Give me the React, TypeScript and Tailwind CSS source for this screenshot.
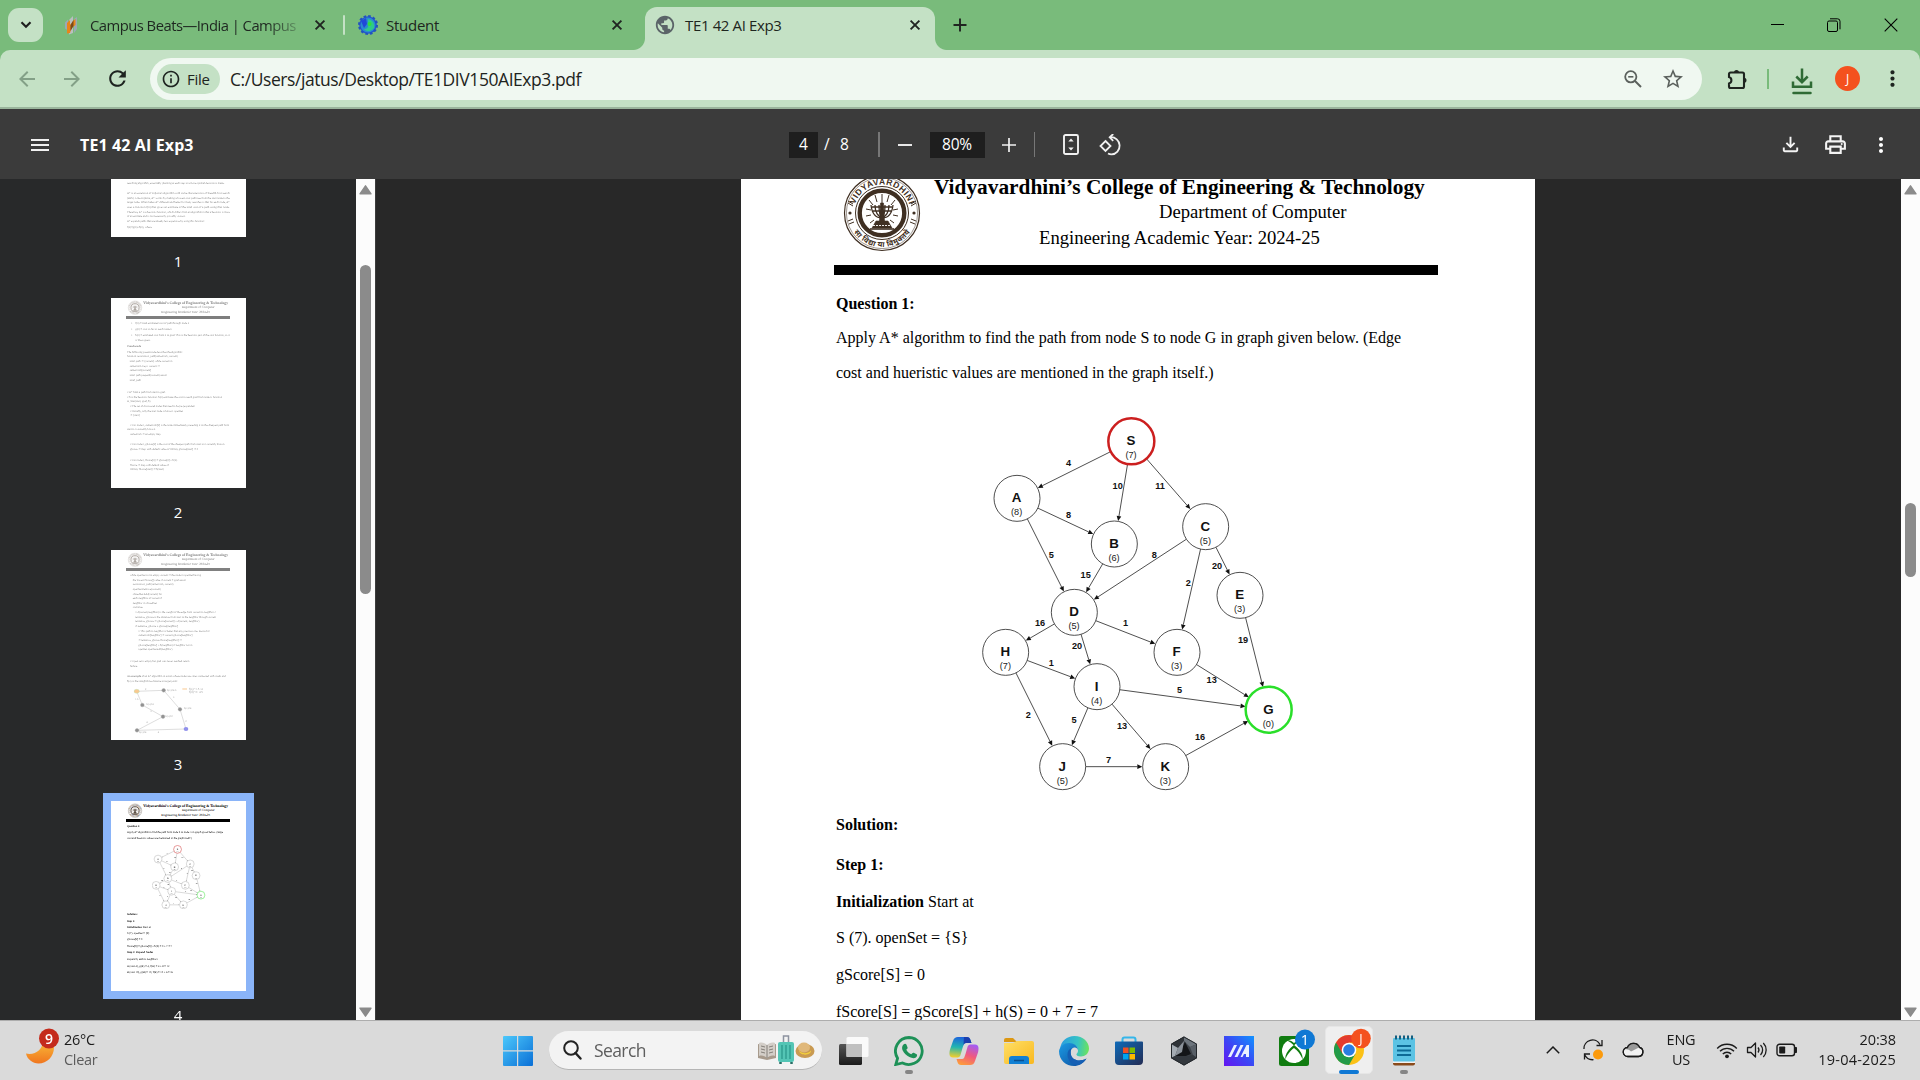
import React from "react";
import {
  MdArrowBack,
  MdArrowForward,
  MdRefresh,
  MdStarBorder,
  MdMoreVert,
  MdPublic,
  MdInfoOutline,
  MdOutlinePrint,
  MdOutlineFileDownload,
} from "react-icons/md";

/* ---------- data ---------- */

type GraphNode = { id: string; h: number; x: number; y: number; color?: string };

const NODES: GraphNode[] = [
  { id: "S", h: 7, x: 514, y: 124, color: "#cc1f1f" },
  { id: "A", h: 8, x: 171, y: 295 },
  { id: "B", h: 6, x: 463, y: 432 },
  { id: "C", h: 5, x: 737, y: 380 },
  { id: "E", h: 3, x: 840, y: 586 },
  { id: "D", h: 5, x: 343, y: 637 },
  { id: "H", h: 7, x: 137, y: 757 },
  { id: "F", h: 3, x: 651, y: 757 },
  { id: "I", h: 4, x: 411, y: 860 },
  { id: "G", h: 0, x: 926, y: 929, color: "#2adf2a" },
  { id: "J", h: 5, x: 308, y: 1100 },
  { id: "K", h: 3, x: 617, y: 1100 },
];

const EDGES: [string, string, string, number, number][] = [
  ["S", "A", "4", 326, 190],
  ["S", "B", "10", 473, 259],
  ["S", "C", "11", 600, 259],
  ["A", "B", "8", 326, 344],
  ["A", "D", "5", 274, 464],
  ["B", "D", "15", 377, 524],
  ["C", "D", "8", 583, 464],
  ["C", "E", "20", 771, 498],
  ["C", "F", "2", 685, 550],
  ["D", "H", "16", 240, 670],
  ["D", "F", "1", 497, 670],
  ["D", "I", "20", 351, 738],
  ["H", "I", "1", 274, 790],
  ["F", "G", "13", 755, 841],
  ["E", "G", "19", 849, 721],
  ["I", "G", "5", 659, 869],
  ["H", "J", "2", 205, 944],
  ["I", "J", "5", 342, 961],
  ["I", "K", "13", 486, 978],
  ["J", "K", "7", 446, 1081],
  ["K", "G", "16", 720, 1012],
];

type ThumbLine = [number, number, string, number?, boolean?];

const THUMB1: ThumbLine[] = [
  [48, 411, "searching algorithm, essentially planning at each step to a more optimal decision is made.", 292],
  [48, 440, "A* is an extension of Dijkstra's algorithm with some characteristics of breadth-first search", 308],
  [48, 456, "(BFS). Like Dijkstra, A* works by making a lowest-cost path tree from the start node to the", 308],
  [48, 468, "target node. What makes A* different and better for many searches is that for each node, A*", 308],
  [48, 482, "uses a function f(n) that gives an estimate of the total cost of a path using that node.", 308],
  [48, 498, "Therefore, A* is a heuristic function, which differs from an algorithm in that a heuristic is more", 308],
  [48, 510, "of an estimate and is not necessarily provably correct.", 175],
  [48, 525, "A* expands paths that are already less expensive by using this function:", 233],
  [48, 543, "f(n)=g(n)+h(n), where", 74],
];

const THUMB2: ThumbLine[] = [
  [60, 79, "•", 4],
  [73, 79, "f(n) = total estimated cost of path through node n", 161],
  [60, 97, "•", 4],
  [73, 97, "g(n) = cost so far to reach node n", 109],
  [60, 115, "•", 4],
  [73, 115, "h(n) = estimated cost from n to goal. This is the heuristic part of the cost function, so it", 283],
  [73, 130, "is like a guess.", 46],
  [48, 147, "Pseudocode", 42, true],
  [48, 166, "The following pseudocode describes the algorithm:", 167],
  [48, 178, "function reconstruct_path(cameFrom, current)", 152],
  [56, 193, "total_path := {current} while current in", 128],
  [56, 208, "cameFrom.Keys: current :=", 90],
  [56, 220, "cameFrom[current]", 64],
  [56, 235, "total_path.prepend(current) return", 112],
  [56, 250, "total_path", 34],
  [48, 286, "// A* finds a path from start to goal.", 116],
  [48, 301, "// h is the heuristic function. h(n) estimates the cost to reach goal from node n. function", 285],
  [48, 313, "A_Star(start, goal, h)", 70],
  [57, 328, "// The set of discovered nodes that need to be (re-)expanded.", 195],
  [57, 343, "// Initially, only the start node is known. openSet", 159],
  [57, 355, ":= {start}", 30],
  [57, 385, "// For node n, cameFrom[n] is the node immediately preceding it on the cheapest path from", 297],
  [48, 397, "start to n currently known.", 86],
  [57, 412, "cameFrom := an empty map", 92],
  [57, 442, "// For node n, gScore[n] is the cost of the cheapest path from start to n currently known.", 285],
  [57, 457, "gScore := map with default value of Infinity gScore[start] := 0", 204],
  [57, 490, "// For node n, fScore[n] := gScore[n] + h(n).", 143],
  [57, 505, "fScore := map with default value of", 116],
  [57, 517, "Infinity fScore[start] := h(start)", 102],
];

const THUMB3: ThumbLine[] = [
  [57, 79, "while openSet is not empty current := the node in openSet having", 213],
  [65, 94, "the lowest fScore[] value if current = goal return", 160],
  [65, 106, "reconstruct_path(cameFrom, current)", 122],
  [65, 121, "openSet.Remove(current)", 84],
  [65, 135, "closedSet.Add(current) for", 88],
  [65, 148, "each neighbor of current if", 88],
  [65, 163, "neighbor in closedSet", 72],
  [65, 175, "continue", 30],
  [73, 190, "// d(current,neighbor) is the weight of the edge from current to neighbor //", 242],
  [73, 204, "tentative_gScore is the distance from start to the neighbor through current", 242],
  [73, 217, "tentative_gScore := gScore[current] + d(current, neighbor)", 192],
  [73, 232, "if tentative_gScore < gScore[neighbor]", 128],
  [82, 246, "// This path to neighbor is better than any previous one. Record it!", 214],
  [82, 259, "cameFrom[neighbor] := current gScore[neighbor]", 162],
  [82, 273, ":= tentative_gScore fScore[neighbor] :=", 130],
  [82, 288, "gScore[neighbor] + h(neighbor) if neighbor not in", 162],
  [82, 300, "openSet openSet.add(neighbor)", 102],
  [57, 337, "// Open set is empty but goal was never reached return", 178],
  [57, 351, "failure", 22],
  [48, 382, "An example", 42, true],
  [92, 382, "of an A* algorithm in action where nodes are cities connected with roads and", 252],
  [48, 396, "h(x) is the straight-line distance to target point:", 152],
];

const THUMB4: ThumbLine[] = [
  [48, 79, "Question 1:", 39, true],
  [48, 96, "Apply A* algorithm to find the path from node S to node G in graph given below. (Edge", 288],
  [48, 114, "cost and hueristic values are mentioned in the graph itself.)", 194],
  [48, 342, "Solution:", 32, true],
  [48, 363, "Step 1:", 24, true],
  [48, 381, "Initialization", 45, true],
  [95, 381, "Start at", 24],
  [48, 399, "S (7). openSet = {S}", 68],
  [48, 417, "gScore[S] = 0", 46],
  [48, 438, "fScore[S] = gScore[S] + h(S) = 0 + 7 = 7", 135],
  [48, 457, "Step 2: Expand Nodes", 78, true],
  [48, 477, "Expand S, add its neighbors:", 94],
  [48, 498, "A (cost 4), g(A) = 4, f(A) = 4 + 8 = 12", 127],
  [48, 517, "B (cost 10), g(B) = 10, f(B) = 10 + 6 = 16", 138],
];

/* ---------- drawings ---------- */

function Graph({ bare }: { bare?: boolean }) {
  const R = 69;
  const at = (id: string) => NODES.find((n) => n.id === id)!;
  return (
    <g fontFamily='"Liberation Sans", Arial, sans-serif' fill="#111" textAnchor="middle">
      {EDGES.map(([a, b, label, lx, ly], i) => {
        const p = at(a);
        const q = at(b);
        const len = Math.hypot(q.x - p.x, q.y - p.y);
        const ux = (q.x - p.x) / len;
        const uy = (q.y - p.y) / len;
        const ex = q.x - ux * (R + 1);
        const ey = q.y - uy * (R + 1);
        const bx = ex - ux * 15;
        const by = ey - uy * 15;
        return (
          <g key={i}>
            <line x1={p.x + ux * R} y1={p.y + uy * R} x2={bx} y2={by} stroke="#333" strokeWidth={bare ? 4 : 2.6} />
            <polygon points={`${ex},${ey} ${bx - uy * 7},${by + ux * 7} ${bx + uy * 7},${by - ux * 7}`} />
            <text x={lx} y={ly + 8.5} fontSize="27.5" fontWeight="700">{label}</text>
          </g>
        );
      })}
      {NODES.map((n) => (
        <g key={n.id}>
          <circle cx={n.x} cy={n.y} r={R} fill="#fff" stroke={n.color ?? "#333"} strokeWidth={n.color ? (bare ? 10 : 7.5) : bare ? 4 : 2.6} />
          <text x={n.x - 1} y={n.y + 12} fontSize="40" fontWeight="700">{n.id}</text>
          <text x={n.x - 1} y={n.y + 51} fontSize="27.500" fill="#222">({n.h})</text>
        </g>
      ))}
    </g>
  );
}

function Seal() {
  const c = "#3f2f22";
  return (
    <g fill="none" stroke={c}>
      <circle cx="39" cy="39" r="37.5" fill="#fff" strokeWidth="1.2" />
      <circle cx="39" cy="39" r="35.6" strokeWidth=".5" />
      <circle cx="39" cy="39" r="26.5" strokeWidth="1" />
      <circle cx="39" cy="39" r="22.3" strokeWidth="4.4" />
      <defs>
        <path id="sealTop" d="M 10.5 39 A 28.5 28.5 0 0 1 67.5 39" />
        <path id="sealBottom" d="M 5 39 A 34 34 0 0 0 73 39" />
      </defs>
      <g fill={c} stroke="none" fontFamily='"Liberation Sans", Arial, sans-serif' fontWeight="700">
        <text fontSize="8.5">
          <textPath href="#sealTop" startOffset="50%" textAnchor="middle" textLength="72">VIDYAVARDHINI</textPath>
        </text>
        <text fontSize="7.5" fontFamily='"Noto Sans", sans-serif'>
          <textPath href="#sealBottom" startOffset="50%" textAnchor="middle" textLength="66">सा विद्या या विमुक्तये</textPath>
        </text>
        <circle cx="7" cy="39" r="1.6" />
        <circle cx="71" cy="39" r="1.6" />
      </g>
      <path d="M5 27l5 3M5 29l5 3M5 47l5-2M6 50l5-2M73 27l-5 3M73 29l-5 3M73 47l-5-2M72 50l-5-2" strokeWidth="1" />
      <path d="M39 20v9M32 21l2 7M46 21l-2 7M26 26l4 5M52 26l-4 5M23 35l5 1M55 35l-5 1M23 42l5-1M55 42l-5-1M27 49l4-3M51 49l-4-3" strokeWidth="1" />
      <path d="M28 31c1 9 5 13 11 13s10-4 11-13M32 31c0 7 3 12 7 12s7-5 7-12M36 31c0 6 1 11 3 11s3-5 3-11M29 33h20M30 37h18" strokeWidth="1.3" />
      <path d="M37.5 29h3l1 18h-5z M33 47h12l4 7H29z" fill={c} strokeWidth=".6" />
      <path d="M30 51.5h18" stroke="#fff" strokeWidth=".9" strokeDasharray="2 1" />
      <path d="M27 55h24" strokeWidth="1.6" />
    </g>
  );
}

function Thumb({ lines, faded, header, page }: { lines: ThumbLine[]; faded?: boolean; header?: boolean; page: number }) {
  return (
    <svg viewBox="0 0 405 570" preserveAspectRatio="none" className="block h-[190px] w-[135px] bg-white">
      <g
        opacity={faded ? 0.5 : 1}
        fontFamily='"Liberation Serif", "Times New Roman", serif'
        fontSize="8.2"
        textRendering="geometricPrecision"
      >
        {header && (
          <g>
            <g transform="translate(51 8) scale(.54)">
              <Seal />
            </g>
            <g stroke="#000" strokeWidth=".1">
              <text x="97" y="18" fontSize="11" fontWeight="700" textLength="254">Vidyavardhini’s College of Engineering &amp; Technology</text>
              <text x="213" y="31" fontSize="9.6" textLength="98">Department of Computer</text>
              <text x="151" y="45" fontSize="9.6" textLength="146">Engineering Academic Year: 2024-25</text>
            </g>
            <rect x="45" y="54" width="312" height="9" />
          </g>
        )}
        <g stroke="#000" strokeWidth=".12" opacity=".85">
          {lines.map(([x, y, t, w, bold], i) => (
            <text key={i} x={x} y={y} fontWeight={bold ? 700 : 400} textLength={w} lengthAdjust="spacingAndGlyphs">{t}</text>
          ))}
        </g>
        {page === 3 && (
          <g stroke="#555" strokeWidth="1.2">
            <path d="M77 424L158 421L207 478L225 537L78 541L156 500L94 465Z" fill="none" />
            <g fill="#222">
              <circle cx="158" cy="421" r="5.5" />
              <circle cx="207" cy="478" r="5.5" />
              <circle cx="78" cy="541" r="5.5" />
              <circle cx="156" cy="500" r="5.5" />
              <circle cx="94" cy="465" r="5.5" />
            </g>
            <ellipse cx="77" cy="424" rx="8" ry="6" fill="#f39320" stroke="#6ac36a" />
            <ellipse cx="225" cy="537" rx="7" ry="6" fill="#2222d8" stroke="none" />
            <path d="M214 417h14" stroke="#f39320" strokeWidth="3" />
            <g fill="#333" stroke="none" fontSize="8">
              <text x="102" y="420">2</text>
              <text x="186" y="445">3</text>
              <text x="72" y="450">1.5</text>
              <text x="118" y="487">3</text>
              <text x="106" y="518">4</text>
              <text x="140" y="548">4</text>
              <text x="223" y="515">2</text>
              <text x="168" y="422">h(x)=4.5</text>
              <text x="106" y="465">h(x)=4</text>
              <text x="163" y="501">h(x)=2</text>
              <text x="219" y="478">h(x)=4</text>
              <text x="84" y="550">h(x)=4</text>
              <text x="234" y="419" fontSize="9.5">f(a)=1.5+4</text>
              <text x="234" y="428" fontSize="9.5">f(d)=2+4.5</text>
            </g>
          </g>
        )}
        {page === 4 && (
          <g transform="translate(112 124) scale(.1705)" opacity=".8">
            <Graph bare />
          </g>
        )}
      </g>
    </svg>
  );
}

function Cross() {
  return (
    <svg viewBox="0 0 12 12" className="size-3 shrink-0">
      <path d="M1.6 1.6l8.8 8.8M10.4 1.6l-8.8 8.8" stroke="#202421" strokeWidth="1.9" />
    </svg>
  );
}

/* ---------- browser chrome ---------- */

function TabStrip() {
  return (
    <div className="flex h-[50px] items-center bg-[#79bb7b] text-[15px] text-[#1e2620]">
      <div className="ml-2 flex h-[34px] w-[35px] items-center justify-center rounded-[11px] bg-[#c4e1c5]">
        <svg viewBox="0 0 12 8" className="h-2 w-3"><path d="M1.5 1.2L6 5.8l4.500-4.600" fill="none" stroke="#1e1e1e" strokeWidth="2.100" /></svg>
      </div>
      <svg viewBox="0 0 16 20" className="ml-5 h-5 w-4">
        <path d="M2 7.500l3-3v11l-3-2zM11 4l3-2v12l-3 4z" fill="#9aa9b5" />
        <path d="M6 5l4-4v17l-4 1.500z" fill="#b9bfc0" />
        <path d="M4 8l3-3v5l4-5 1.500-1v6l-4 3-1.500 5-3 .5z" fill="#e8851a" />
        <path d="M7.500 10l3-5v6l-3 5z" fill="#7a4a1c" />
      </svg>
      <div className="ml-[11px] w-[210px] overflow-hidden whitespace-nowrap text-[14.800px] tracking-[-0.520px] [mask-image:linear-gradient(to_right,#000_84%,transparent_104%)]">Campus Beats—India | Campus</div>
      <div className="ml-[14px] flex"><Cross /></div>
      <div className="ml-[17px] h-[20px] w-[2px] rounded bg-[#c4e1c5]" />
      <svg viewBox="0 0 22 22" className="ml-[12px] size-[22px]">
        <circle cx="11" cy="11" r="8.800" fill="#2456d6" stroke="#2352bf" strokeWidth="2.400" strokeDasharray="2.600 2" />
        <circle cx="11" cy="11" r="7.500" fill="#2a8bd0" />
        <path d="M11 5a7 7 0 0 1 6 9c-3 4-8 4-10 1 3 0 5-2 4-5z" fill="#2fc98a" />
        <path d="M4 7l5-3 1 6-3 4z" fill="#2148d8" />
        <circle cx="12.500" cy="10" r="2" fill="#2fe03a" />
      </svg>
      <div className="ml-[7px] w-[225px] tracking-[-0.250px]">Student</div>
      <Cross />
      <div className="ml-[10px] size-3 self-end bg-[radial-gradient(circle_at_0_0,transparent_11.5px,#c4e1c5_12.500px)]" />
      <div className="mt-[7px] flex h-[43px] w-[290px] items-center rounded-t-[12px] bg-[#c4e1c5] pb-[7px]">
        <MdPublic className="ml-[9px] size-[22px] text-[#5b6468]" />
        <div className="ml-[9px] w-[224px] tracking-[-0.360px]">TE1 42 AI Exp3</div>
        <Cross />
      </div>
      <div className="size-3 self-end bg-[radial-gradient(circle_at_100%_0,transparent_11.5px,#c4e1c5_12.500px)]" />
      <svg viewBox="0 0 14 14" className="ml-[6px] size-[14px]"><path d="M7 .5v13M.5 7h13" stroke="#202421" strokeWidth="1.900" /></svg>
      <svg viewBox="0 0 13 13" className="ml-auto size-[13px]"><path d="M0 5.500h13" stroke="#000" /></svg>
      <svg viewBox="0 0 14 14" className="ml-[43px] size-[14px]">
        <rect x=".5" y="3" width="10" height="10.500" rx="1.500" fill="none" stroke="#000" />
        <path d="M3 .8h7.500a2.500 2.500 0 0 1 2.500 2.500v8" fill="none" stroke="#000" />
      </svg>
      <svg viewBox="0 0 14 14" className="ml-[43px] mr-[22px] size-[14px]"><path d="M.7 .7l12.600 12.600M13.300 .7L.7 13.300" stroke="#000" strokeWidth="1.100" /></svg>
    </div>
  );
}

function AddressBar() {
  return (
    <div className="bg-[#79bb7b]">
      <div className="flex h-[59px] items-center rounded-t-[10px] border-b-2 border-[#9ab59c] bg-[#c4e1c5]">
        <MdArrowBack className="ml-[15px] size-6 text-[#83a087]" />
        <MdArrowForward className="ml-[21px] size-6 text-[#83a087]" />
        <MdRefresh className="ml-[21px] size-[25px] text-[#1e2420]" />
        <div className="ml-5 mt-[1px] flex h-[42px] w-[1552px] items-center rounded-full bg-[#f0f8f1]">
          <div className="ml-[7px] flex h-[30px] w-[63px] items-center rounded-full bg-[#c4e1c5]">
            <MdInfoOutline className="ml-[4px] size-5 text-[#1e2420]" />
            <span className="ml-[6px] text-[15px] font-medium tracking-[-0.3px] text-[#1e2420]">File</span>
          </div>
          <span className="ml-[10px] text-[17.500px] tracking-[-0.440px] text-[#1e2420]">C:/Users/jatus/Desktop/TE1DIV150AIExp3.pdf</span>
          <svg viewBox="0 0 18 18" className="ml-auto size-[18px]" fill="none" stroke="#5b615d">
            <circle cx="6.800" cy="6.800" r="5.600" strokeWidth="1.800" /><path d="M11 11l6 6" strokeWidth="2" /><path d="M4.200 6.800h5.200" strokeWidth="1.600" />
          </svg>
          <MdStarBorder className="ml-[19px] mr-[17px] size-6 text-[#5b615d]" />
        </div>
        <svg viewBox="0 0 22 22" className="ml-[24px] size-[22px]">
          <path d="M4.500 4.500H16.500a1.500 1.500 0 0 1 1.500 1.500V18.500a1.500 1.500 0 0 1-1.500 1.500H4.500A1.500 1.500 0 0 1 3 18.500V15.500a3.400 3.400 0 0 0 0-6.500V6a1.500 1.500 0 0 1 1.500-1.500z" fill="none" stroke="#1e2420" strokeWidth="2.100" />
          <path d="M8 4.500a2.500 2.500 0 0 1 5 0zM18 9.700a2.500 2.500 0 0 1 0 5z" fill="#1e2420" />
        </svg>
        <div className="ml-[19px] h-5 w-[2px] bg-[#79bb7b]" />
        <svg viewBox="0 0 22 28" className="ml-[22px] mt-[7px] h-7 w-[22px]" fill="none" stroke="#2f6b35">
          <path d="M11 .5v13M5.300 8.500L11 14.200l5.700-5.700" strokeWidth="2.500" />
          <path d="M2 13.500v5.200h18v-5.200" strokeWidth="2.500" />
          <path d="M2.500 25h17" strokeWidth="2.500" strokeLinecap="round" />
        </svg>
        <div className="ml-[22px] flex size-[25px] items-center justify-center rounded-full bg-[#f4511e] text-[12px] text-white">J</div>
        <MdMoreVert className="ml-[20px] size-[25px] text-[#1e2420]" />
      </div>
    </div>
  );
}

function PdfToolbar() {
  return (
    <div className="flex h-[70px] items-center bg-[#3b3b3b] pt-[1px] text-[15.500px] text-white">
      <svg viewBox="0 0 18 12" className="ml-[31px] h-3 w-[18px]"><path d="M0 1h18M0 6h18M0 11h18" stroke="#f1f1f1" strokeWidth="1.900" /></svg>
      <div className="ml-[31px] w-[709px] text-[16px] font-bold tracking-[0.120px]">TE1 42 AI Exp3</div>
      <div className="flex h-[26px] w-[29px] items-center justify-center bg-[#1e1e1e]">4</div>
      <div className="ml-[6px] w-[16px]">/</div>
      <div className="w-[38px]">8</div>
      <div className="h-[25px] w-[1.500px] bg-[#777]" />
      <div className="ml-[18px] h-[2px] w-[14px] bg-[#e8e8e8]" />
      <div className="ml-[18px] flex h-[26px] w-[55px] items-center justify-center bg-[#1e1e1e] tracking-[-0.2px]">80%</div>
      <svg viewBox="0 0 14 14" className="ml-[17px] size-[14px]"><path d="M7 0v14M0 7h14" stroke="#f1f1f1" strokeWidth="1.700" /></svg>
      <div className="ml-[18px] h-[25px] w-px bg-[#777]" />
      <svg viewBox="0 0 16 25" className="ml-[28px] h-[25px] w-4">
        <rect x="1" y="1" width="14" height="19" rx="1.500" fill="none" stroke="#f1f1f1" strokeWidth="1.900" transform="translate(0 2)" />
        <path d="M8 6.500l2.700 3H5.300zM8 18.500l2.700-3H5.300z" fill="#f1f1f1" />
      </svg>
      <svg viewBox="0 0 22 22" className="ml-[20px] size-[22px]" fill="none" stroke="#f1f1f1" strokeWidth="1.800">
        <path d="M6.500 7l5 5-5 5-5-5z" />
        <path d="M11.500 3.200a8.600 8.600 0 0 1 1 17.200M12.500 20.400a8 8 0 0 1-3.500-.9" />
        <path d="M14.200 0l-3.500 3.300 3.500 3.500" />
      </svg>
      <MdOutlineFileDownload className="ml-auto size-[23px] text-[#f4f4f4]" />
      <MdOutlinePrint className="ml-[21px] size-[25px] text-[#f4f4f4]" />
      <MdMoreVert className="ml-[21px] mr-[27px] size-[24px] text-white" />
    </div>
  );
}

/* ---------- viewer ---------- */

function ScrollArrow({ down }: { down?: boolean }) {
  return (
    <svg viewBox="0 0 13 10" className={down ? "h-[10px] w-[13px] rotate-180" : "h-[10px] w-[13px]"}>
      <path d="M6.500 .8L12 8.800H1z" fill="#8b8b8b" stroke="#8b8b8b" strokeLinejoin="round" strokeWidth="1.400" />
    </svg>
  );
}

function Sidebar() {
  return (
    <div className="flex h-[841px] w-[376px] shrink-0 overflow-hidden border-r border-[#3c3c3c] bg-[#28292a]">
      <div className="-mt-[132px] flex w-[356px] flex-col items-center text-[15px] text-white">
        <div className="h-[190px] bg-white"><Thumb lines={THUMB1} faded page={1} /></div>
        <div className="mb-[13px] h-12 leading-[48px]">1</div>
        <div className="h-[190px] bg-white"><Thumb lines={THUMB2} faded header page={2} /></div>
        <div className="mb-[14px] h-12 leading-[48px]">2</div>
        <div className="h-[190px] bg-white"><Thumb lines={THUMB3} faded header page={3} /></div>
        <div className="mb-[13px] h-12 leading-[48px]">3</div>
        <div className="h-[190px] bg-white ring-8 ring-[#8ab4f8]"><Thumb lines={THUMB4} header page={4} /></div>
        <div className="h-12 leading-[48px]">4</div>
      </div>
      <div className="flex h-[841px] w-[19px] flex-col items-center bg-[#fcfcfc] pt-[6px]">
        <ScrollArrow />
        <div className="mt-[70px] h-[329px] w-[11px] rounded-full bg-[#8b8b8b]" />
        <div className="mb-[3px] mt-auto flex"><ScrollArrow down /></div>
      </div>
    </div>
  );
}

function Page() {
  return (
    <div className="ml-[365px] h-[841px] w-[794px] shrink-0 overflow-hidden bg-white font-['Liberation_Serif','Times_New_Roman',serif] text-black">
      <div className="-mt-[5px] flex h-[91px]">
        <svg viewBox="0 0 78 78" className="ml-[102px] size-[78px] shrink-0"><Seal /></svg>
        <div className="ml-[13px] mt-px flex flex-col whitespace-nowrap leading-6">
          <div className="text-[21.330px] font-bold">Vidyavardhini’s College of Engineering &amp; Technology</div>
          <div className="mt-px pl-[225px] text-[18.670px]">Department of Computer</div>
          <div className="mt-[2px] pl-[105px] text-[18.670px]">Engineering Academic Year: 2024-25</div>
        </div>
      </div>
      <div className="ml-[93px] h-[10px] w-[604px] bg-black" />
      <div className="ml-[95px] mt-[19px] flex flex-col whitespace-nowrap text-[16px] leading-5">
        <b>Question 1:</b>
        <p className="mt-[14px]">Apply A* algorithm to find the path from node S to node G in graph given below. (Edge</p>
        <p className="mt-[15px]">cost and hueristic values are mentioned in the graph itself.)</p>
        <svg viewBox="0 0 1050 1200" className="ml-[124px] mt-[17px] h-[400px] w-[350px]"><Graph /></svg>
        <b className="mt-[15px]">Solution:</b>
        <b className="mt-[20px]">Step 1:</b>
        <p className="mt-[17px]"><b>Initialization</b> Start at</p>
        <p className="mt-4">S (7). openSet = {"{S}"}</p>
        <p className="mt-[17px]">gScore[S] = 0</p>
        <p className="mt-[17px]">fScore[S] = gScore[S] + h(S) = 0 + 7 = 7</p>
      </div>
    </div>
  );
}

/* ---------- taskbar ---------- */

function AppSlot({ children, dot }: { children: React.ReactNode; dot?: boolean }) {
  return (
    <div className="flex h-[59px] w-[55px] flex-col items-center pt-[14px]">
      <div className="flex h-[31px] items-center">{children}</div>
      {dot && <div className="mt-[4px] h-[4px] w-[8px] rounded-full bg-[#858585]" />}
    </div>
  );
}

function Taskbar() {
  return (
    <div className="flex h-[60px] items-center border-t border-[#adadad] bg-[#dadada] text-[14.500px] text-[#1b1b1b]">
      <div className="ml-[25px] flex w-[478px] items-center">
        <svg viewBox="0 0 36 40" className="mb-2 h-10 w-9 shrink-0">
          <defs><linearGradient id="moon" x1="0" y1="0" x2="0" y2="1"><stop offset="0" stopColor="#f9bd3a" /><stop offset="1" stopColor="#f0761f" /></linearGradient></defs>
          <path d="M1 26.500c9 2 17-4 17-13 4-1 10 2 11 7 0 9-7 16-15.500 16C7.500 36.500 2 32 1 26.500z" fill="url(#moon)" />
          <circle cx="24" cy="11.500" r="10" fill="#c42b1c" />
          <text x="24" y="16.500" textAnchor="middle" fontSize="14" fontWeight="600" fill="#fff">9</text>
        </svg>
        <div className="mb-[2px] ml-[3px] leading-5 tracking-[-0.300px]">
          <div>26°C</div>
          <div className="text-[#5c5c5c]">Clear</div>
        </div>
      </div>
      <svg viewBox="0 0 30 30" className="size-[30px]">
        <defs><linearGradient id="win" x1="0" y1="0" x2="1" y2="1"><stop offset="0" stopColor="#4cc8fb" /><stop offset="1" stopColor="#0a6fd6" /></linearGradient></defs>
        <path d="M0 1a1 1 0 0 1 1-1h13v14.300H0zM15.200 0H29a1 1 0 0 1 1 1v13.300H15.200zM0 15.500h14V30H1a1 1 0 0 1-1-1zM15.200 15.500H30V29a1 1 0 0 1-1 1H15.200z" fill="url(#win)" />
      </svg>
      <div className="ml-[16px] flex h-[39px] w-[273px] items-center rounded-full border-b border-[#b5b5b5] bg-[#f3f3f3]">
        <svg viewBox="0 0 20 20" className="ml-[13px] size-5"><circle cx="9" cy="8" r="6.800" fill="none" stroke="#222" strokeWidth="2" /><path d="M13.500 13l5 5.500" stroke="#222" strokeWidth="2.400" strokeLinecap="round" /></svg>
        <span className="ml-[12px] text-[17.500px] tracking-[-0.600px] text-[#5e5e5e]">Search</span>
        <svg viewBox="0 0 58 30" className="ml-auto mr-[7px] h-[30px] w-[58px]">
          <path d="M1 9l9 2 9-2v14l-9 2-9-2z" fill="#a79a8c" />
          <path d="M2 8c3-1 6 0 8 2 2-2 5-3 8-2v13c-3-1-6 0-8 2-2-2-5-3-8-2z" fill="#d3cec8" />
          <path d="M10 10v13M4 11l4 1M4 14l4 1M4 17l4 1M12 12l4-1M12 15l4-1M12 18l4-1" stroke="#85807a" strokeWidth="1" />
          <path d="M26.500 7V1h5v6" fill="none" stroke="#8d93a0" strokeWidth="1.500" />
          <rect x="21" y="7" width="16" height="20" rx="2" fill="#54c5b5" />
          <path d="M25 10v14M29 10v14M33 10v14" stroke="#2f9c90" strokeWidth="1.400" />
          <path d="M23.500 27v2M34.500 27v2" stroke="#286e66" strokeWidth="2.500" />
          <ellipse cx="48" cy="16" rx="9.500" ry="7" fill="#c99a52" />
          <ellipse cx="47" cy="12.500" rx="6" ry="5" fill="#e0b87a" />
          <path d="M42 15.500c3 3.500 9 3.500 12 0 .5 5-11 6-12 0z" fill="#f3cf3c" />
        </svg>
      </div>
      <div className="ml-[4px] flex h-[59px]">
        <AppSlot>
          <svg viewBox="0 0 30 30" className="size-[30px]">
            <defs><linearGradient id="tv" x1="0" y1="0" x2="0" y2="1"><stop offset="0" stopColor="#555" /><stop offset="1" stopColor="#1b1b1b" /></linearGradient></defs>
            <rect x="0" y="8" width="23" height="21" rx="1.500" fill="url(#tv)" />
            <rect x="7.500" y="1" width="22" height="20" rx="1.500" fill="#fafafa" />
            <rect x="7.500" y="8" width="15.500" height="13" fill="#c0c0c0" />
          </svg>
        </AppSlot>
        <AppSlot dot>
          <svg viewBox="0 0 30 30" className="size-[30px]">
            <path d="M15 1.500A13.500 13.500 0 1 1 8.500 27L1.800 28.500l1.800-6.300A13.500 13.500 0 0 1 15 1.500z" fill="#dcdedd" stroke="#1d9157" strokeWidth="2.800" />
            <path d="M9.500 8.500c1-1.200 2.400-1 2.900 0l1.200 2.900c.3 1-.8 1.700-1.300 2.400 1.200 2.200 2.800 3.600 5 4.500.8-.7 1.500-2 2.500-1.500l2.800 1.400c1 .5.400 2.500-.7 3.300-1.700 1.200-4 .8-6.500-.4-3-1.400-5.300-3.700-6.700-6.500-1-2.200-.8-4.500.8-6.100z" fill="#1d9157" />
          </svg>
        </AppSlot>
        <AppSlot>
          <svg viewBox="0 0 30 30" className="size-[30px]">
            <defs>
              <linearGradient id="cpA" x1=".4" y1="0" x2=".3" y2="1"><stop offset="0" stopColor="#1c63dc" /><stop offset=".5" stopColor="#21b6b0" /><stop offset="1" stopColor="#f5cf2b" /></linearGradient>
              <linearGradient id="cpB" x1=".7" y1="0" x2=".3" y2="1"><stop offset="0" stopColor="#a45bf2" /><stop offset=".5" stopColor="#f0587f" /><stop offset="1" stopColor="#fd9b3b" /></linearGradient>
            </defs>
            <path d="M9 1h9c3 0 3.500 3 4.500 6H17c-2 0-2.500 2-3.500 5l-2 7c-.5 2-2 2.500-4 2.500H4c-4 0-4-4-3-8L4 5c1-3 2.500-4 5-4z" fill="url(#cpA)" />
            <path d="M21 29h-9c-3 0-3.500-3-4.500-6H13c2 0 2.500-2 3.500-5l2-7c.5-2 2-2.500 4-2.500H26c4 0 4 4 3 8L26 25c-1 3-2.500 4-5 4z" fill="url(#cpB)" />
            <path d="M15 1h3c3 0 3.500 3 4.500 6H17c-1 0-2 .8-2.500 2z" fill="#1b3fae" />
          </svg>
        </AppSlot>
        <AppSlot>
          <svg viewBox="0 0 30 28" className="h-[28px] w-[30px]">
            <defs><linearGradient id="fo" x1="0" y1="0" x2="1" y2="1"><stop offset="0" stopColor="#ffdf66" /><stop offset="1" stopColor="#f9b81f" /></linearGradient></defs>
            <path d="M0 3a2 2 0 0 1 2-2h7l4 4H0z" fill="#dc9712" />
            <path d="M0 6h9l4-2h15a2 2 0 0 1 2 2v19a2 2 0 0 1-2 2H2a2 2 0 0 1-2-2z" fill="url(#fo)" />
            <path d="M5 27v-5a3 3 0 0 1 3-3h14a3 3 0 0 1 3 3v5z" fill="#1180d4" />
            <path d="M10 23.500h10" stroke="#0b4f8e" strokeWidth="1.500" />
          </svg>
        </AppSlot>
        <AppSlot>
          <svg viewBox="0 0 30 30" className="size-[30px]">
            <defs>
              <linearGradient id="edA" x1="0" y1=".4" x2="1" y2=".5"><stop offset="0" stopColor="#2a9de0" /><stop offset=".6" stopColor="#35c3c4" /><stop offset="1" stopColor="#6be35e" /></linearGradient>
              <linearGradient id="edB" x1="0" y1="0" x2="1" y2="1"><stop offset="0" stopColor="#1b9be3" /><stop offset="1" stopColor="#0d4b9e" /></linearGradient>
            </defs>
            <path d="M1 13C2 5 8 0 15.500 0 24 0 30 6 30 12.500c0 5-4 8-8 8-3.500 0-5-1.500-4.500-2.500 1-1 1.500-2 1.500-3.500 0-4-4-6.500-8.500-6.500C6 8 2.500 10 1 13z" fill="url(#edA)" />
            <path d="M0 15c1-5 5-8 10-8 5 0 9 3 9 7.500 0-2-2-3.500-4-3-3 .8-4 4-3 7.500 1.500 5 8 7.500 15.500 3.500-3 5-8 7.500-12.500 7.500C7 30 0 24 0 15z" fill="url(#edB)" />
            <path d="M13 12c-3 1-4.500 3-4.500 6.500C8.500 25 14 30 20 28.800c3-1 5.500-3 7.500-6.300C20 26.500 13.500 24 12 19c-.6-3-.5-5.500 1-7z" fill="#155fb4" />
          </svg>
        </AppSlot>
        <AppSlot>
          <svg viewBox="0 0 30 30" className="size-[30px]">
            <defs><linearGradient id="st" x1="0" y1="0" x2="1" y2="1"><stop offset="0" stopColor="#0f6ab8" /><stop offset="1" stopColor="#232c54" /></linearGradient></defs>
            <path d="M8.500 7V3.500A2 2 0 0 1 10.500 1.500h9a2 2 0 0 1 2 2V7" fill="none" stroke="#35b6ea" strokeWidth="2" />
            <path d="M1 6.500a1 1 0 0 1 1-1h26a1 1 0 0 1 1 1V25a4 4 0 0 1-4 4H5a4 4 0 0 1-4-4z" fill="url(#st)" />
            <path d="M9 11.500h5.500V17H9z" fill="#f25022" /><path d="M15.500 11.500H21V17h-5.500z" fill="#7fba00" />
            <path d="M9 18h5.500v5.500H9z" fill="#00a4ef" /><path d="M15.500 18H21v5.500h-5.500z" fill="#ffb900" />
          </svg>
        </AppSlot>
        <AppSlot>
          <svg viewBox="0 0 28 30" className="h-[30px] w-7">
            <path d="M14 .5L27 8v14l-13 7.500L1 22V8z" fill="#3d4248" />
            <path d="M14 .5L27 8 20 11l-6-6z" fill="#6d757d" />
            <path d="M14 .5V5L8 12 1 8z" fill="#2f3338" />
            <path d="M1 8l7 4-3 8-4 2z" fill="#a5acb3" />
            <path d="M27 8l-7 3 3 8 4 3z" fill="#585f67" />
            <path d="M15 6l6 12-5 2-11 0 6-6z" fill="#131518" />
            <path d="M14 5L8 12l-3 8 7-4z" fill="#8b929a" />
            <path d="M1 22l4-2h11l7-1 4 3-13 7.500z" fill="#33383e" />
            <path d="M14 1L26.500 8v14L14 29 1.500 22V8z" fill="none" stroke="#24282c" strokeWidth="1" />
          </svg>
        </AppSlot>
        <AppSlot>
          <svg viewBox="0 0 30 30" className="size-[30px]">
            <defs><linearGradient id="my" x1="1" y1="0" x2="0" y2="1"><stop offset="0" stopColor="#1193ff" /><stop offset=".5" stopColor="#3a48f5" /><stop offset="1" stopColor="#6414f0" /></linearGradient></defs>
            <rect width="30" height="30" fill="url(#my)" />
            <path d="M4 21L10 9h3L7 21zM10.500 21l6-12h3l-6 12zM16.500 21l6-12H25v12h-3v-3h-2l-1.500 3z" fill="#e9f0ff" />
          </svg>
        </AppSlot>
        <AppSlot>
          <svg viewBox="0 0 40 40" className="-mt-[10px] ml-[10px] size-10 shrink-0">
            <rect x="0" y="10" width="30" height="30" rx="2.500" fill="#107c10" />
            <circle cx="15" cy="25" r="12" fill="#fff" />
            <path d="M7 14.500c3-1 6 .5 8 2.500 2-2 5-3.500 8-2.500-3.500.5-6 3-8 5-2-2-4.500-4.500-8-5zM12 21.500l3-2.500 3 2.500c5 5 6 9 5.500 12-1-4-5-9-8.500-11.500-3.500 2.500-7.500 7.500-8.500 11.500-.5-3 .5-7 5.500-12z" fill="#107c10" />
            <circle cx="26" cy="13.500" r="10" fill="#0f78d4" />
            <text x="26" y="19" textAnchor="middle" fontSize="14.500" fill="#fff">1</text>
          </svg>
        </AppSlot>
        <div className="mx-[3.500px] mt-[5px] flex h-12 w-12 flex-col items-center rounded-[5px] border border-[#e6e6e6] bg-[#efefef]">
          <svg viewBox="0 0 38 38" className="ml-[8px] mt-[1px] size-[38px] shrink-0">
            <circle cx="15" cy="22" r="15" fill="#fbc116" />
            <path d="M2 14.500A15 15 0 0 0 15 37l6.500-11.300L15 22z" fill="#229a48" />
            <path d="M2 14.500A15 15 0 0 1 28 14.500H15L8.500 25.800z" fill="#e33b2e" />
            <circle cx="15" cy="22" r="7.300" fill="#fff" />
            <circle cx="15" cy="22" r="5.800" fill="#2a7de1" />
            <circle cx="27" cy="10.500" r="9.800" fill="#f4511e" />
            <text x="27" y="15" textAnchor="middle" fontSize="12.500" fill="#fff">J</text>
          </svg>
          <div className="mt-[4px] h-[4px] w-5 shrink-0 rounded-full bg-[#0f78d4]" />
        </div>
        <AppSlot dot>
          <svg viewBox="0 0 24 31" className="h-[31px] w-6">
            <path d="M1 27h22v1.500a2 2 0 0 1-2 2H3a2 2 0 0 1-2-2z" fill="#8a4a1a" />
            <path d="M1 25.500h22v2.500H1z" fill="#f1f1f1" />
            <rect x="1" y="3" width="22" height="23.500" rx="1" fill="#5cc3e4" />
            <path d="M5 11h14M5 15.500h14M5 20h14" stroke="#0d6a95" strokeWidth="2" />
            <path d="M4 .5v4M8 .5v4M12 .5v4M16 .5v4M20 .5v4" stroke="#145f80" strokeWidth="2" />
          </svg>
        </AppSlot>
      </div>
      <div className="ml-auto flex items-center whitespace-nowrap pb-[1px]">
        <svg viewBox="0 0 14 8" className="h-2 w-[14px]"><path d="M.8 7.200L7 1l6.200 6.200" fill="none" stroke="#1b1b1b" strokeWidth="1.500" /></svg>
        <svg viewBox="0 0 22 22" className="ml-[22px] size-[22px]" fill="none" stroke="#1b1b1b" strokeWidth="1.300">
          <path d="M2 10a8.500 8.500 0 0 1 16-4.500M20 1v5.500h-5.500M2.500 20.500V15H8M2.500 15.500a9 9 0 0 0 9 5.200" />
          <circle cx="16" cy="15.500" r="5" fill="#fb9a0c" stroke="none" />
        </svg>
        <svg viewBox="0 0 22 16" className="ml-[18px] h-4 w-[22px]" stroke="#1b1b1b" strokeWidth="1.300">
          <path d="M6 14.500a4.500 4.500 0 0 1-.5-9 6.500 6.500 0 0 1 12-.2 4.700 4.700 0 0 1-1 9.200z" fill="#f2f2f2" />
          <path d="M2.500 7.500a4 4 0 0 1 3-2 6.500 6.500 0 0 1 12-.2L9 9.500C7 7 4.500 6.800 2.500 7.500z" fill="#999" stroke="none" />
          <path d="M6 14.500a4.500 4.500 0 0 1-.5-9 6.500 6.500 0 0 1 12-.2 4.700 4.700 0 0 1-1 9.200z" fill="none" />
        </svg>
        <div className="ml-[20px] w-[34px] text-center leading-5 tracking-[-0.200px]"><div>ENG</div><div>US</div></div>
        <svg viewBox="0 0 22 17" className="ml-[18px] h-[17px] w-[22px]" fill="none" stroke="#1b1b1b" strokeWidth="1.400">
          <path d="M1.200 6.500a13.500 13.500 0 0 1 19.600 0M4 9.300a9.800 9.800 0 0 1 14 0M6.800 12a6 6 0 0 1 8.400 0" />
          <circle cx="11" cy="14.300" r="1.900" fill="#1b1b1b" stroke="none" />
        </svg>
        <svg viewBox="0 0 22 18" className="ml-[8px] h-[18px] w-[22px]" fill="none" stroke="#1b1b1b" strokeWidth="1.300">
          <path d="M1.500 6.500h3.500L9.500 2v14L5 11.500H1.500z" strokeLinejoin="round" />
          <path d="M12 6.500a4 4 0 0 1 0 5M14.500 4a7 7 0 0 1 0 10M17.300 2a10 10 0 0 1 0 14" />
        </svg>
        <svg viewBox="0 0 22 14" className="ml-[8px] h-[14px] w-[22px]">
          <rect x="1" y="1.200" width="17.500" height="11.600" rx="2.500" fill="none" stroke="#1b1b1b" strokeWidth="1.400" />
          <rect x="3.200" y="3.500" width="6" height="7" rx=".8" fill="#1b1b1b" />
          <path d="M19 4.500h1.500v5H19z" fill="#1b1b1b" stroke="#1b1b1b" />
        </svg>
        <div className="ml-[17px] mr-6 w-[81px] text-right leading-5"><div className="tracking-[-0.100px]">20:38</div><div className="tracking-[0.200px]">19-04-2025</div></div>
      </div>
    </div>
  );
}

export default function App() {
  return (
    <div className="h-[1080px] w-[1920px] overflow-hidden bg-[#282828] font-['Open_Sans','Noto_Sans',sans-serif]">
      <TabStrip />
      <AddressBar />
      <PdfToolbar />
      <div className="flex h-[841px]">
        <Sidebar />
        <Page />
        <div className="ml-auto flex w-[19px] flex-col items-center bg-[#fcfcfc] pt-[6px]">
          <ScrollArrow />
          <div className="mt-[308px] h-[74px] w-[11px] rounded-full bg-[#8b8b8b]" />
          <div className="mb-[3px] mt-auto flex"><ScrollArrow down /></div>
        </div>
      </div>
      <Taskbar />
    </div>
  );
}
